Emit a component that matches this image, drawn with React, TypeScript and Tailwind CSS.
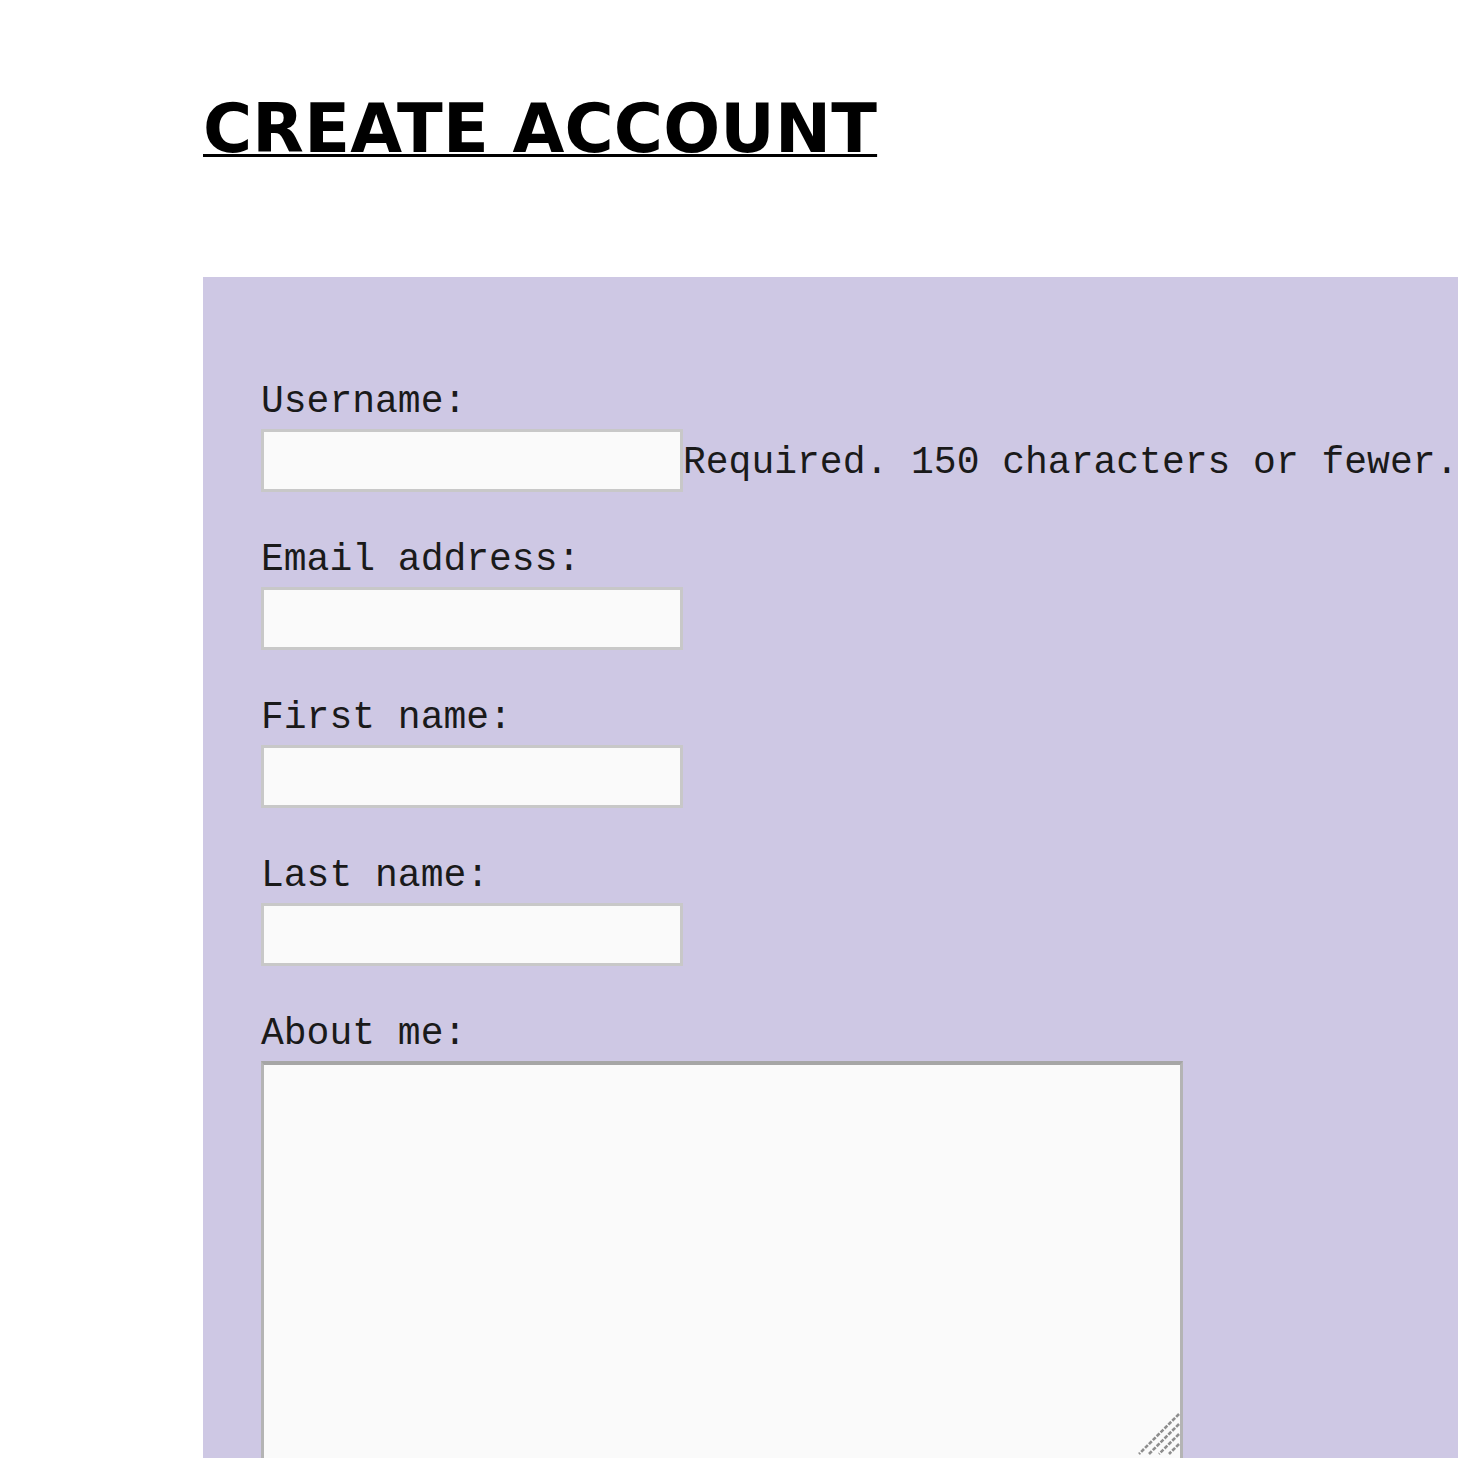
import React from 'react';

const mono = { fontFamily: '"Liberation Mono", "Courier New", monospace' };

const FIELDS = [
  { label: 'Username:', help: 'Required. 150 characters or fewer.' },
  { label: 'Email address:' },
  { label: 'First name:' },
  { label: 'Last name:' },
];

const App = () => {
  return (
    <div className="w-full h-[1458px] overflow-hidden bg-white">
      {/* heading */}
      <div className="pl-[203px] pt-[96px] h-[277px]">
        <h1
          className="text-[67px] font-bold leading-none underline decoration-[3px] underline-offset-[2px] tracking-[0.2px] text-black whitespace-pre"
          style={{ fontFamily: '"DejaVu Sans", "Open Sans", sans-serif' }}
        >
          CREATE ACCOUNT
        </h1>
      </div>

      {/* form panel */}
      <div className="ml-[203px] bg-[#cec8e4] pl-[58px] pt-[103px] h-[1181px] text-[#1a1a1a]" style={mono}>
        {FIELDS.map((f) => (
          <div key={f.label} className="mb-[46px]">
            <label className="block text-[38px] leading-[43px] whitespace-pre">{f.label}</label>
            <div className="flex items-center mt-[6px]">
              <input
                type="text"
                className="w-[422px] h-[63px] shrink-0 bg-[#fafafa] border-[3px] border-[#c8c8c8] outline-none"
              />
              {f.help && (
                <span className="text-[38px] leading-[43px] whitespace-pre mt-[4px]">{f.help}</span>
              )}
            </div>
          </div>
        ))}
        <div>
          <label className="block text-[38px] leading-[43px] whitespace-pre">About me:</label>
          <div className="relative mt-[6px] w-[922px]">
            <textarea
              className="block w-[922px] h-[420px] resize-none bg-[#fafafa] border-[3px] border-[#b4b4b4] border-t-[4px] border-t-[#a6a6a6] outline-none"
            />
            {/* resize grip */}
            <svg
              className="absolute top-[352px] right-[3px]"
              width="42"
              height="42"
              viewBox="0 0 42 42"
            >
              <g stroke="#8e8e8e" strokeWidth="2.6" strokeDasharray="4 1.5">
                <line x1="41" y1="1" x2="1" y2="41" />
                <line x1="41" y1="11" x2="11" y2="41" />
                <line x1="41" y1="21" x2="21" y2="41" />
                <line x1="41" y1="31" x2="31" y2="41" />
              </g>
            </svg>
          </div>
        </div>
      </div>
    </div>
  );
};

export default App;
